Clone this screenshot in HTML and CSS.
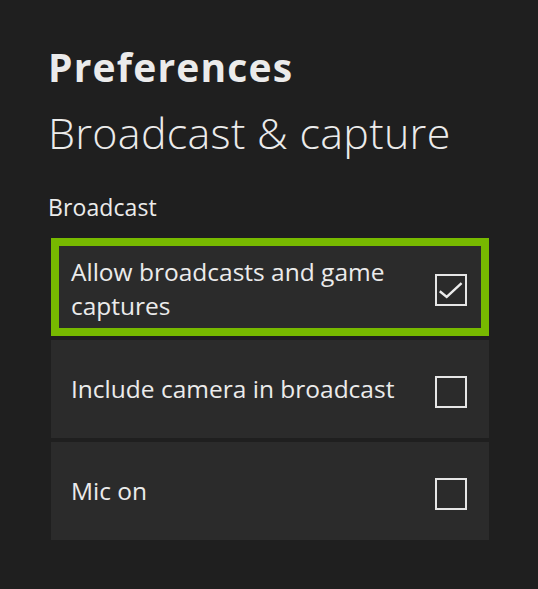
FILE: index.html
```html
<!DOCTYPE html>
<html lang="en">
<head>
<meta charset="utf-8">
<title>Preferences - Broadcast &amp; capture</title>
<link rel="stylesheet" href="styles.css">
</head>
<body>
<main class="page">
  <h1 class="title">Preferences</h1>
  <h2 class="subtitle">Broadcast &amp; capture</h2>
  <div class="section-label">Broadcast</div>
  <ul class="options">
    <li class="option focused">
      <span class="option-text">Allow broadcasts and game captures</span>
      <span class="checkbox">
        <svg viewBox="0 0 28 28" width="28" height="28" class="check"><path d="M3.7 16 L9.7 21 L23.7 8" fill="none" stroke="#ececec" stroke-width="2.4" stroke-linecap="square"/></svg>
      </span>
    </li>
    <li class="option">
      <span class="option-text">Include camera in broadcast</span>
      <span class="checkbox"></span>
    </li>
    <li class="option">
      <span class="option-text">Mic on</span>
      <span class="checkbox"></span>
    </li>
  </ul>
</main>
</body>
</html>
```

FILE: styles.css
```css
html, body {
  margin: 0;
  padding: 0;
  background: #1f1f1f;
}
body {
  font-family: "Open Sans", "Noto Sans", sans-serif;
  color: #ebebeb;
}
.page {
  padding: 43px 49px 0 48px;
}
.title {
  margin: 0;
  font-size: 39px;
  font-weight: 700;
  line-height: 48px;
  letter-spacing: 1.2px;
}
.subtitle {
  margin: 16px 0 0;
  font-size: 43px;
  font-weight: 300;
  line-height: 52px;
  letter-spacing: 0.3px;
}
.section-label {
  margin-top: 32px;
  font-size: 23px;
  line-height: 32px;
  letter-spacing: 0.1px;
}
.options {
  list-style: none;
  margin: 15px 0 0 3px;
  padding: 0;
  display: flex;
  flex-direction: column;
  gap: 4px;
}
.option {
  box-sizing: border-box;
  height: 98px;
  background: #2b2b2b;
  display: flex;
  align-items: center;
  padding: 0 22px 0 20px;
  font-size: 24.5px;
  line-height: 32px;
}
.option.focused {
  border: 8px solid #77b900;
  padding: 0 14px 0 12px;
  line-height: 34px;
}
.option.focused .option-text {
  margin-top: 3px;
}
.option-text {
  flex: 1;
  max-width: 345px;
}
.checkbox {
  box-sizing: border-box;
  width: 32px;
  height: 32px;
  border: 2px solid #e6e6e6;
  margin-top: 6px;
  margin-left: auto;
  display: flex;
  align-items: center;
  justify-content: center;
}
.check {
  display: block;
}
```
